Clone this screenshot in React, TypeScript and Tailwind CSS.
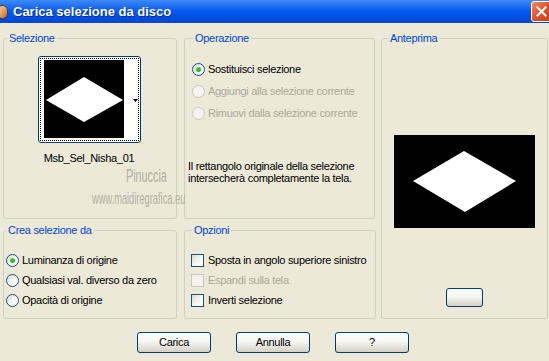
import React from "react";

const font = { fontFamily: '"Liberation Sans", Arial, sans-serif' };

function Radio({ checked, disabled, label }: { checked?: boolean; disabled?: boolean; label: string }) {
  return (
    <div className="flex items-center h-[20px]">
      <div
        className={
          "w-[13px] h-[13px] rounded-full border flex items-center justify-center shrink-0 " +
          (disabled
            ? "border-[#cac8bb] bg-[#f4f3ee]"
            : "border-[#1c5180] bg-gradient-to-br from-[#dcdcd5] via-[#f4f4f0] to-white")
        }
      >
        {checked && (
          <div className="w-[5px] h-[5px] rounded-full bg-gradient-to-br from-[#55d751] to-[#21a121]" />
        )}
      </div>
      <span className={"ml-[3px] whitespace-nowrap " + (disabled ? "text-[#aca899]" : "text-black")}>{label}</span>
    </div>
  );
}

function Check({ disabled, label }: { disabled?: boolean; label: string }) {
  return (
    <div className="flex items-center h-[20px]">
      <div
        className={
          "w-[13px] h-[13px] border shrink-0 " +
          (disabled
            ? "border-[#cac8bb] bg-[#f4f3ee]"
            : "border-[#1c5180] bg-gradient-to-br from-[#dcdcd5] via-[#f4f4f0] to-white")
        }
      />
      <span className={"ml-[4px] whitespace-nowrap " + (disabled ? "text-[#aca899]" : "text-black")}>{label}</span>
    </div>
  );
}

function Button({ children, className = "" }: { children?: React.ReactNode; className?: string }) {
  return (
    <div
      className={
        "h-[21px] border border-[#003c74] rounded-[3px] bg-gradient-to-b from-white via-[#f3f3ef] to-[#d6d0c5] flex items-center justify-center text-black " +
        className
      }
    >
      {children}
    </div>
  );
}

export default function App() {
  return (
    <div
      className="w-[549px] h-[361px] bg-[#ece9d8] overflow-hidden text-[11px] leading-[13px] tracking-[-0.3px]"
      style={font}
    >
      {/* Title bar */}
      <div className="h-[23px] flex items-center bg-gradient-to-b from-[#3d8af7] via-[#0058ee] to-[#0047d0] relative">
        <div className="w-[11px] h-[14px] ml-[-3px] rounded-full bg-gradient-to-br from-[#f7d9a0] to-[#c46a2a] border border-[#6b3a16]" />
        <span className="ml-[5px] text-white font-bold text-[13px] tracking-normal [text-shadow:1px_1px_0_#0a2a8a]">
          Carica selezione da disco
        </span>
        <div className="ml-auto mr-[-3px] w-[21px] h-[21px] rounded-[3px] border border-white bg-gradient-to-br from-[#f08a6a] via-[#e0522a] to-[#c0401c] flex items-center justify-center">
          <svg width="11" height="11" viewBox="0 0 11 11">
            <path d="M1.5 1.5 L9.5 9.5 M9.5 1.5 L1.5 9.5" stroke="white" strokeWidth="2" strokeLinecap="square" />
          </svg>
        </div>
      </div>

      {/* Body */}
      <div className="flex pt-[9px] pl-[3px]">
        {/* Left two columns */}
        <div className="flex flex-col">
          <div className="flex">
            {/* Selezione */}
            <fieldset className="w-[174px] h-[187px] border border-[#d0d0bf] rounded-[3px] relative">
              <legend className="ml-[3px] px-[2px] text-[#0046d5]">Selezione</legend>
              <div className="flex flex-col items-center mt-[11px] pr-[2px]">
                <div className="w-[103px] h-[87px] border border-[#003c74] rounded-[3px] bg-white p-[1px]">
                  <div className="w-full h-full border border-dotted border-black flex pt-[1px] pl-[3px]">
                    <div className="w-[80px] h-[78px] bg-black">
                      <svg width="80" height="78" viewBox="0 0 80 78">
                        <polygon points="2,40 40,17 79,40 40,62" fill="white" />
                      </svg>
                    </div>
                    <div className="w-[8px] h-[78px] bg-white" />
                    <div className="flex items-center">
                      <svg width="5" height="4" viewBox="0 0 5 4" className="ml-[1px] mt-[2px]">
                        <polygon points="0,0 5,0 2.5,3" fill="black" />
                      </svg>
                    </div>
                  </div>
                </div>
                <div className="mt-[9px] text-black">Msb_Sel_Nisha_01</div>
              </div>
              {/* watermark */}
              <div className="absolute left-[88px] top-[122px] text-[#b4b0a4] pointer-events-none select-none tracking-normal">
                <div className="ml-[34px] text-[18px] leading-[18px] origin-left scale-x-[0.6]">Pinuccia</div>
                <div className="mt-[6px] text-[16px] leading-[16px] whitespace-nowrap origin-left scale-x-[0.58]">
                  www.maidiregrafica.eu
                </div>
              </div>
            </fieldset>
            {/* Operazione */}
            <fieldset className="ml-[7px] w-[191px] h-[187px] border border-[#d0d0bf] rounded-[3px]">
              <legend className="ml-[8px] px-[2px] text-[#0046d5]">Operazione</legend>
              <div className="pl-[7px] mt-[14px] flex flex-col gap-[2px]">
                <Radio checked label="Sostituisci selezione" />
                <Radio disabled label="Aggiungi alla selezione corrente" />
                <Radio disabled label="Rimuovi dalla selezione corrente" />
              </div>
              <div className="pl-[3px] mt-[37px] text-black leading-[12px]">
                Il rettangolo originale della selezione
                <br />
                intersecherà completamente la tela.
              </div>
            </fieldset>
          </div>
          <div className="flex mt-[5px]">
            {/* Crea selezione da */}
            <fieldset className="w-[174px] h-[95px] border border-[#d0d0bf] rounded-[3px]">
              <legend className="ml-[2px] px-[2px] text-[#0046d5]">Crea selezione da</legend>
              <div className="pl-[2px] mt-[13px] flex flex-col">
                <Radio checked label="Luminanza di origine" />
                <Radio label="Qualsiasi val. diverso da zero" />
                <Radio label="Opacità di origine" />
              </div>
            </fieldset>
            {/* Opzioni */}
            <fieldset className="ml-[7px] w-[192px] h-[95px] border border-[#d0d0bf] rounded-[3px]">
              <legend className="ml-[7px] px-[2px] text-[#0046d5]">Opzioni</legend>
              <div className="pl-[6px] mt-[13px] flex flex-col">
                <Check label="Sposta in angolo superiore sinistro" />
                <Check disabled label="Espandi sulla tela" />
                <Check label="Inverti selezione" />
              </div>
            </fieldset>
          </div>
        </div>
        {/* Anteprima */}
        <fieldset className="ml-[5px] w-[167px] h-[287px] border border-[#d0d0bf] rounded-[3px] flex flex-col items-center">
          <legend className="ml-[6px] px-[2px] text-[#0046d5]">Anteprima</legend>
          <div className="mt-[90px] w-[141px] h-[93px] bg-black">
            <svg width="141" height="93" viewBox="0 0 141 93">
              <polygon points="19,46 70,16 122,46 71,77" fill="white" />
            </svg>
          </div>
          <Button className="mt-[60px] w-[37px] !h-[19px]" />
        </fieldset>
      </div>

      {/* Bottom buttons */}
      <div className="flex pl-[137px] mt-[13px] gap-[25px]">
        <Button className="w-[74px]">Carica</Button>
        <Button className="w-[74px]">Annulla</Button>
        <Button className="w-[74px]">?</Button>
      </div>
    </div>
  );
}
